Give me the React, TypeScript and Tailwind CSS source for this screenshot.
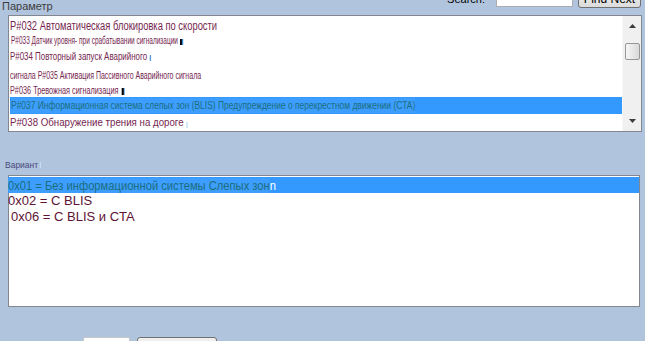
export default function App() {
  return (
    <div className="w-[645px] h-[341px] overflow-hidden bg-[#b0c4de] font-['Liberation_Sans',Arial,sans-serif] flex flex-col">
      {/* header */}
      <div className="shrink-0 h-[15px] flex justify-between items-start">
        <div className="pl-[2px] text-[11px] leading-[13px] text-[#3c3c3c]">Параметр</div>
        <div className="h-[8px] flex items-end pr-[4px]">
          <span className="text-[11px] leading-[11px] mb-[3px] text-black">Search:</span>
          <div className="ml-[11px] mb-[1px] w-[77px] h-[20px] bg-white border border-[#abadb3]" />
          <button className="ml-[5px] w-[63px] h-[22px] rounded-[3px] border border-[#707070] bg-linear-to-b from-[#f2f2f2] to-[#dcdcdc] text-[12px] leading-[12px] text-black flex items-end justify-center pb-[2px]">
            Find Next
          </button>
        </div>
      </div>

      {/* parameter list */}
      <div className="shrink-0 ml-[8px] w-[634px] h-[117px] border border-[#82878f] bg-white flex">
        <div className="flex-1 flex flex-col whitespace-nowrap text-[#75264f]">
          <div className="shrink-0 h-[20px] flex items-center pl-[1px]">
            <span className="inline-block origin-left scale-x-[0.78] text-[12px] leading-[14px]">
              P#032 Автоматическая блокировка по скорости
            </span>
          </div>
          <div className="shrink-0 h-[10px] flex items-center pl-[2px]">
            <span className="inline-flex items-end origin-left scale-x-[0.65] text-[10px] leading-[12px]">
              P#033 Датчик уровня- при срабатывании сигнализации
              <span className="ml-[3px] mb-[2px] inline-block w-[3px] h-[6px] bg-black" />
              <span className="mb-[2px] inline-block w-[2px] h-[6px] bg-[#3b8fe0]" />
            </span>
          </div>
          <div className="shrink-0 h-[21px] flex items-center pl-[1px]">
            <span className="inline-flex items-end origin-left scale-x-[0.72] text-[11px] leading-[13px]">
              P#034 Повторный запуск Аварийного
              <span className="ml-[4px] mb-[2px] inline-block w-[1.5px] h-[6px] bg-[#5d9fd8]" />
            </span>
          </div>
          <div className="shrink-0 h-[17px] flex items-center pl-[1px]">
            <span className="inline-block origin-left scale-x-[0.70] text-[10px] leading-[12px]">
              сигнала P#035 Активация Пассивного Аварийного сигнала
            </span>
          </div>
          <div className="shrink-0 h-[13px] flex items-center pl-[1px]">
            <span className="inline-flex items-end origin-left scale-x-[0.73] text-[10px] leading-[12px]">
              P#036 Тревожная сигнализация
              <span className="ml-[4px] mb-[2px] inline-block w-[3px] h-[7px] bg-black" />
              <span className="mb-[2px] inline-block w-[1.5px] h-[7px] bg-[#3b8fe0]" />
            </span>
          </div>
          <div className="shrink-0 h-[17px] ml-[1px] flex items-center bg-[#3399ff]">
            <span className="ml-[1px] inline-block origin-left scale-x-[0.845] text-[10px] leading-[15px] text-[#1b6e7e] bg-[#3d9eff]">
              P#037 Информационная система слепых зон (BLIS) Предупреждение о перекрестном движении (CTA)
            </span>
          </div>
          <div className="shrink-0 h-[17px] flex items-center pl-[1px]">
            <span className="inline-flex items-end origin-left scale-x-[0.97] text-[10px] leading-[12px]">
              P#038 Обнаружение трения на дороге
              <span className="ml-[3px] mb-[1px] inline-block w-[1px] h-[6px] bg-[#a6d4f2]" />
            </span>
          </div>
        </div>
        {/* scrollbar */}
        <div className="w-[19px] bg-[#f0f0f0] border-l border-[#f9f9f9] flex flex-col items-center">
          <div className="shrink-0 h-[20px] flex items-center justify-center">
            <svg width="7" height="4" viewBox="0 0 7 4">
              <path d="M3.5 0 L7 4 L0 4 Z" fill="#3c3c3c" />
            </svg>
          </div>
          <div className="shrink-0 mt-[7px] w-[15px] h-[17px] rounded-[2px] border border-[#979797] bg-linear-to-r from-[#f6f6f6] to-[#d9d9d9]" />
          <div className="flex-1" />
          <div className="shrink-0 h-[20px] flex items-center justify-center">
            <svg width="7" height="4" viewBox="0 0 7 4">
              <path d="M0 0 L7 0 L3.5 4 Z" fill="#3c3c3c" />
            </svg>
          </div>
        </div>
      </div>

      {/* variant label */}
      <div className="shrink-0 mt-[28px] h-[10px] pl-[5px] flex items-center">
        <span className="text-[8.5px] leading-[10px] text-[#4a4a7c]">Вариант</span>
        <span className="ml-[2px] inline-block w-[1px] h-[6px] bg-[#c7dcf0]" />
      </div>

      {/* variant list */}
      <div className="shrink-0 mt-[5px] ml-[8px] w-[632px] h-[132px] border border-[#82878f] bg-white flex flex-col whitespace-nowrap text-[13px] text-[#5e1435]">
        <div className="shrink-0 -ml-[1px] mt-[1px] h-[16px] flex items-center bg-[#3399ff]">
          <span className="inline-block origin-left scale-x-[0.86] leading-[15px]">
            <span className="text-[#1b6e7e] bg-[#3d9eff]">0x01 = Без информационной системы Слепых зон</span>
            <span className="text-white">n</span>
          </span>
        </div>
        <div className="shrink-0 -ml-[1px] h-[15px] flex items-center">
          <span className="leading-[15px]">0x02 = C BLIS</span>
        </div>
        <div className="shrink-0 h-[16px] flex items-center pl-[2px]">
          <span className="leading-[15px]">0x06 = C BLIS и CTA</span>
        </div>
      </div>

      {/* bottom buttons */}
      <div className="shrink-0 mt-[30px] flex">
        <div className="ml-[83px] w-[47px] h-[22px] bg-white border border-[#c8c8c8] rounded-[2px]" />
        <div className="ml-[7px] w-[80px] h-[22px] border border-[#707070] rounded-[3px] bg-[#efefef]" />
      </div>
    </div>
  );
}
